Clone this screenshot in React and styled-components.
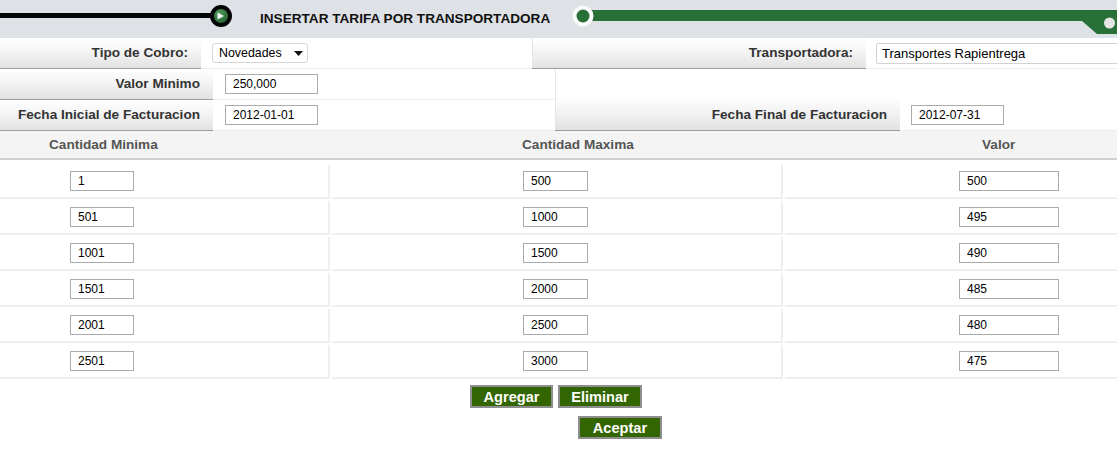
import React from 'react';
import styled, { createGlobalStyle } from 'styled-components';

const GlobalStyle = createGlobalStyle`
  *, *::before, *::after { box-sizing: border-box; }
  html, body { margin: 0; padding: 0; background: #fff; }
  body {
    font-family: "Liberation Sans", Arial, sans-serif;
    width: 1117px;
    overflow: hidden;
  }
`;

const Page = styled.div`
  width: 1117px;
`;

const Header = styled.header`
  display: flex;
  align-items: center;
  height: 38px;
  background: #dee1e5;
`;

const Title = styled.h1`
  margin: 0 0 0 20px;
  font-size: 13.6px;
  font-weight: bold;
  line-height: 38px;
  color: #111;
  white-space: nowrap;
`;

const RightDecor = styled.svg`
  margin-left: auto;
  display: block;
`;

const FormRow = styled.div`
  display: grid;
  grid-template-columns: ${({ $cols }) => $cols};
  grid-auto-rows: 31px;
`;

const LabelCell = styled.div`
  grid-row: span ${({ $span }) => $span || 1};
  display: flex;
  align-items: ${({ $span }) => ($span > 1 ? 'flex-end' : 'center')};
  justify-content: flex-end;
  padding-right: 13px;
  background: ${({ $span }) =>
    $span > 1
      ? 'linear-gradient(#ffffff 0%, #ffffff 45%, #f3f3f3 70%, #e2e2e2 100%)'
      : 'linear-gradient(#ffffff 0%, #f4f4f4 45%, #e2e2e2 100%)'};
  border-bottom: 1px solid #9d9d9d;
  ${({ $edge }) => $edge && 'box-shadow: inset 1px 0 0 #e6e6e6;'}
  font-size: 13.6px;
  font-weight: bold;
  line-height: 30px;
  color: #333;
  white-space: nowrap;
`;

const ValueCell = styled.div`
  grid-row: span ${({ $span }) => $span || 1};
  display: flex;
  align-items: ${({ $span }) => ($span > 1 ? 'flex-end' : 'center')};
  padding: 0 0 ${({ $span }) => ($span > 1 ? '5px' : '0')} ${({ $pad }) => $pad ?? 11}px;
  background: #fff;
  border-bottom: 1px solid #ececec;
  overflow: hidden;
`;

const TextInput = styled.input`
  width: ${({ $w }) => $w}px;
  height: 20px;
  flex-shrink: 0;
  padding: 0 7px;
  border: 1px solid #ababab;
  background: #fff;
  font: 12px "Liberation Sans", Arial, sans-serif;
  color: #000;
  outline: none;
`;

const SoftInput = styled(TextInput)`
  height: 21px;
  padding: 0 5px;
  border-color: #d2d2d2;
  border-radius: 2px;
  font-size: 13px;
`;

const SelectBox = styled.div`
  display: flex;
  align-items: center;
  justify-content: space-between;
  width: 96px;
  height: 20px;
  padding: 0 4px 0 6px;
  border: 1px solid #d6d6d6;
  border-radius: 3px;
  background: #fff;
  font-size: 12.4px;
  color: #000;
`;

const TableHead = styled.div`
  display: grid;
  grid-template-columns: 330px 453px 1fr;
  height: 29px;
  background: #f4f4f4;
  border-bottom: 2px solid #d0d0d0;
`;

const HeadCell = styled.div`
  padding-left: ${({ $indent }) => $indent}px;
  font-size: 13.6px;
  font-weight: bold;
  line-height: 27px;
  color: #555;
  white-space: nowrap;
`;

const DataBody = styled.div`
  padding-top: 5px;
`;

const DataRow = styled.div`
  display: grid;
  grid-template-columns: 330px 451px 1fr;
  column-gap: 2px;
  margin-bottom: 2px;
`;

const DataCell = styled.div`
  display: flex;
  align-items: center;
  height: 34px;
  padding-left: ${({ $indent }) => $indent}px;
  border-bottom: 2px solid #efefef;
  ${({ $divider }) => $divider && 'border-right: 2px solid #efefef;'}
`;

const Actions = styled.div`
  display: flex;
  flex-direction: column;
  gap: 8px;
  margin-top: 6px;
`;

const ButtonRow = styled.div`
  display: flex;
  justify-content: center;
  gap: 5px;
  padding-left: ${({ $shiftLeft }) => $shiftLeft || 0}px;
  padding-right: ${({ $shiftRight }) => $shiftRight || 0}px;
`;

const Button = styled.button`
  width: ${({ $w }) => $w || 83}px;
  height: 23px;
  padding: 0;
  background: #336600;
  border: 2px solid #8e8e8e;
  color: #fff;
  font: bold 14.6px "Liberation Sans", Arial, sans-serif;
  cursor: pointer;
`;

const rows = [
  ['1', '500', '500'],
  ['501', '1000', '495'],
  ['1001', '1500', '490'],
  ['1501', '2000', '485'],
  ['2001', '2500', '480'],
  ['2501', '3000', '475'],
];

const LeftDecor = () => (
  <svg width="240" height="38" viewBox="0 0 240 38" style={{ display: 'block', flexShrink: 0 }}>
    <defs>
      <radialGradient id="knob" cx="0.4" cy="0.35" r="0.7">
        <stop offset="0" stopColor="#4f9a5c" />
        <stop offset="1" stopColor="#1f5a2b" />
      </radialGradient>
    </defs>
    <rect x="0" y="13" width="214" height="5" fill="#050505" />
    <circle cx="221" cy="16" r="9" fill="url(#knob)" stroke="#050505" strokeWidth="4" />
    <polygon points="217.5,12.5 217.5,19.5 224,16" fill="#f2f2f2" />
  </svg>
);

const GreenLine = () => (
  <RightDecor width="557" height="38" viewBox="0 0 557 38">
    <polygon points="30,10 557,10 557,34 537,34 522,21 30,21" fill="#287038" />
    <circle cx="23" cy="16" r="10.5" fill="#fafafa" />
    <circle cx="23" cy="16" r="6.5" fill="#287038" />
    <circle cx="549.5" cy="23" r="5.5" fill="#e6e6e6" />
  </RightDecor>
);

export default function App() {
  return (
    <Page>
      <GlobalStyle />
      <Header>
        <LeftDecor />
        <Title>INSERTAR TARIFA POR TRANSPORTADORA</Title>
        <GreenLine />
      </Header>

      <FormRow $cols="201px 331px 334px 1fr">
        <LabelCell>Tipo de Cobro:</LabelCell>
        <ValueCell>
          <SelectBox>
            <span>Novedades</span>
            <svg width="9" height="5" viewBox="0 0 9 5">
              <polygon points="0,0 9,0 4.5,5" fill="#111" />
            </svg>
          </SelectBox>
        </ValueCell>
        <LabelCell $edge>Transportadora:</LabelCell>
        <ValueCell $pad={10}>
          <SoftInput $w={270} defaultValue="Transportes Rapientrega" />
        </ValueCell>
      </FormRow>

      <FormRow $cols="213px 342px 345px 1fr">
        <LabelCell>Valor Minimo</LabelCell>
        <ValueCell $pad={12}>
          <TextInput $w={93} defaultValue="250,000" />
        </ValueCell>
        <LabelCell $span={2} $edge>Fecha Final de Facturacion</LabelCell>
        <ValueCell $span={2}>
          <TextInput $w={93} defaultValue="2012-07-31" />
        </ValueCell>
        <LabelCell>Fecha Inicial de Facturacion</LabelCell>
        <ValueCell $pad={12}>
          <TextInput $w={93} defaultValue="2012-01-01" />
        </ValueCell>
      </FormRow>

      <TableHead>
        <HeadCell $indent={49}>Cantidad Minima</HeadCell>
        <HeadCell $indent={192}>Cantidad Maxima</HeadCell>
        <HeadCell $indent={199}>Valor</HeadCell>
      </TableHead>

      <DataBody>
        {rows.map(([min, max, value]) => (
          <DataRow key={min}>
            <DataCell $indent={70} $divider>
              <TextInput $w={64} defaultValue={min} />
            </DataCell>
            <DataCell $indent={191} $divider>
              <TextInput $w={65} defaultValue={max} />
            </DataCell>
            <DataCell $indent={174}>
              <TextInput $w={100} defaultValue={value} />
            </DataCell>
          </DataRow>
        ))}
      </DataBody>

      <Actions>
        <ButtonRow $shiftRight={5}>
          <Button>Agregar</Button>
          <Button $w={84}>Eliminar</Button>
        </ButtonRow>
        <ButtonRow $shiftLeft={123}>
          <Button $w={84}>Aceptar</Button>
        </ButtonRow>
      </Actions>
    </Page>
  );
}
